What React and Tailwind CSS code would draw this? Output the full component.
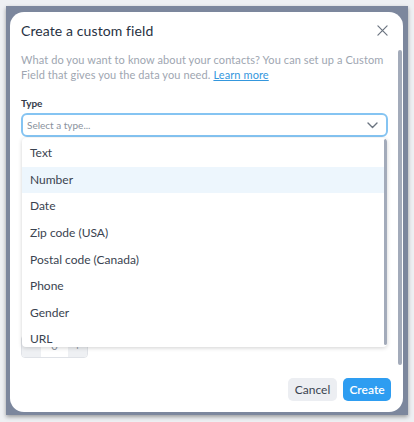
import React, { useState } from 'react';

const TYPES = ['Text', 'Number', 'Date', 'Zip code (USA)', 'Postal code (Canada)', 'Phone', 'Gender', 'URL'];

const App = () => {
  const [hovered, setHovered] = useState('Number');

  return (
    <div className="w-[414px] h-[422px] bg-[#eef0f3] pt-[6px] pl-[6px] font-['Lato',sans-serif]">
      {/* backdrop */}
      <div className="w-[402px] h-[409px] bg-[#7c879d] pl-[4px] pt-[6px] shadow-[0_2px_4px_rgba(0,0,0,0.35)]">
        {/* modal */}
        <div className="relative w-[393px] h-[400px] bg-white rounded-[14px] flex flex-col overflow-hidden">
          <div className="flex items-center justify-between pl-[11px] pr-[15px] h-[36px] shrink-0">
            <h2 className="text-[14px] text-[#273142] tracking-[0.1px]">Create a custom field</h2>
            <button className="text-[#6b7480]">
              <svg width="11" height="11" viewBox="0 0 12 12" fill="none" stroke="currentColor" strokeWidth="1.3" strokeLinecap="round">
                <path d="M1 1l10 10M11 1L1 11" />
              </svg>
            </button>
          </div>

          <div className="relative flex-1 pl-[11px] pr-[15px] pt-[4px]">
            <p className="text-[11px] leading-[15px] text-[#9ea6b1] tracking-[0.1px]">
              What do you want to know about your contacts? You can set up a Custom Field that gives you the data you need.{' '}
              <a href="#" className="text-[#3497dd] underline">Learn more</a>
            </p>

            <label className="block mt-[15px] text-[10px] font-bold text-[#333c4a] leading-[12px]">Type</label>
            <div className="relative mt-[4px]">
              <div className="h-[24px] border-2 border-[#85c4f2] rounded-[6px] flex items-center justify-between pl-[4px] pr-[8px]">
                <span className="text-[10px] text-[#8a929d]">Select a type...</span>
                <svg width="11" height="7" viewBox="0 0 11 7" fill="none" stroke="#6b7480" strokeWidth="1.4" strokeLinecap="round" strokeLinejoin="round">
                  <path d="M1 1l4.5 4.5L10 1" />
                </svg>
              </div>

              {/* dropdown menu */}
              <div className="absolute left-[1px] top-[25px] w-[365px] h-[209px] bg-white rounded-[4px] shadow-[0_1px_4px_rgba(0,0,0,0.18)] overflow-hidden z-10">
                <ul className="pt-[2px]">
                  {TYPES.map((t) => (
                    <li
                      key={t}
                      onMouseEnter={() => setHovered(t)}
                      className={`h-[26.6px] flex items-center pl-[8px] text-[12px] text-[#3a4350] ${hovered === t ? 'bg-[#edf6fd]' : ''}`}
                    >
                      {t}
                    </li>
                  ))}
                </ul>
                <div className="absolute right-[0px] top-[1px] w-[3px] h-[206px] rounded-full bg-[#a3abba]" />
              </div>
            </div>

            {/* stepper partly hidden under the menu */}
            <div className="mt-[198px] w-[67px] h-[23px] flex border border-[#dfe2e7] rounded-[4px] overflow-hidden text-[11px] text-[#8a929d]">
              <div className="w-[19px] bg-[#eef0f3] flex items-center justify-center">−</div>
              <div className="flex-1 flex items-center justify-center">0</div>
              <div className="w-[19px] bg-[#eef0f3] flex items-center justify-center">+</div>
            </div>

            <div className="absolute right-[1px] top-[2px] w-[4px] h-[315px] rounded-full bg-[#a3abba]" />
          </div>

          <div className="flex justify-end gap-[6px] pr-[12px] pb-[11px] pt-[8px]">
            <button className="h-[23px] w-[49px] rounded-[5px] bg-[#eceef2] text-[12px] text-[#3a4350]">Cancel</button>
            <button className="h-[23px] w-[48px] rounded-[5px] bg-[#2e9df1] text-[12px] font-semibold text-white">Create</button>
          </div>
        </div>
      </div>
    </div>
  );
};

export default App;
